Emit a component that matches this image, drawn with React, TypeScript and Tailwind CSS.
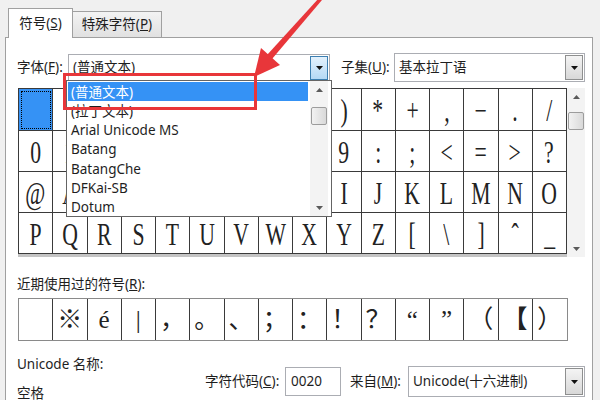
import React from 'react'

const rows: string[][] = [
  [' ', '!', '"', '#', '$', '%', '&', "'", '(', ')', '*', '+', ',', '−', '.', '/'],
  '0123456789:;<=>?'.split(''),
  '@ABCDEFGHIJKLMNO'.split(''),
  ['P', 'Q', 'R', 'S', 'T', 'U', 'V', 'W', 'X', 'Y', 'Z', '[', '\\', ']', 'ˆ', '_'],
]

const recent = ['', '※', 'é', '|', '，', '。', '、', '；', '：', '！', '？', '“', '”', '（', '【', '）']

const fonts = ['(普通文本)', '(拉丁文本)', 'Arial Unicode MS', 'Batang', 'BatangChe', 'DFKai-SB', 'Dotum']

function DropButton({ active }: { active?: boolean }) {
  return (
    <div
      className={
        'flex h-full w-[18px] items-center justify-center border ' +
        (active
          ? 'border-[#3c7fb1] bg-gradient-to-b from-[#e3f1fc] to-[#b4d9f5]'
          : 'border-[#8e8f8f] bg-gradient-to-b from-[#f4f4f4] to-[#d8d8d8]')
      }
    >
      <svg width="7" height="4" viewBox="0 0 7 4">
        <path d="M0 0h7L3.5 4z" fill="#111" />
      </svg>
    </div>
  )
}

function Combo({ text, w, h, active }: { text: string; w: string; h: string; active?: boolean }) {
  return (
    <div className={`${w} ${h} flex items-stretch border border-[#abadb3] bg-white p-px`}>
      <div className="flex flex-1 items-center pl-[3px] text-[13.5px] text-[#1e1e1e]">{text}</div>
      <DropButton active={active} />
    </div>
  )
}

function Scroll({ h, thumbTop }: { h: string; thumbTop: string }) {
  return (
    <div className={`${h} flex w-[18px] flex-col items-center bg-[#f3f3f3]`}>
      <div className="flex h-[17px] w-full items-center justify-center">
        <svg width="7" height="4" viewBox="0 0 7 4">
          <path d="M0 4h7L3.5 0z" fill="#5a5a5a" />
        </svg>
      </div>
      <div className={`${thumbTop} h-[18px] w-[16px] rounded-[2px] border border-[#9c9c9c] bg-gradient-to-r from-[#f2f2f2] to-[#d9d9d9]`} />
      <div className="flex-1" />
      <div className="flex h-[17px] w-full items-center justify-center">
        <svg width="7" height="4" viewBox="0 0 7 4">
          <path d="M0 0h7L3.5 4z" fill="#5a5a5a" />
        </svg>
      </div>
    </div>
  )
}

export default function App() {
  return (
    <div className="relative h-[400px] w-[600px] overflow-hidden bg-[#f0f0f0] font-['Noto_Sans','Noto_Sans_CJK_SC',sans-serif] text-[13.5px] text-[#1e1e1e]">
      {/* tabs */}
      <div className="flex h-[37px] items-end pl-2">
        <div className="relative z-10 mb-[-1px] flex h-[30px] w-[65px] items-center justify-center border border-b-0 border-[#a0a0a0] bg-white">
          符号(<span className="underline">S</span>)
        </div>
        <div className="flex h-[26px] w-[89px] items-center justify-center border border-b-0 border-l-0 border-[#a0a0a0] bg-gradient-to-b from-[#f3f3f3] to-[#e1e1e1]">
          特殊字符(<span className="underline">P</span>)
        </div>
      </div>

      <div className="ml-[5px] h-[380px] w-[588px] border border-[#a0a0a0] bg-white pl-[11px] pt-[15px]">
        <div className="flex h-[29px] items-center">
          <span className="w-[48px]">字体(<span className="underline">F</span>):</span>
          <div className="ml-[3px]">
            <Combo text="(普通文本)" w="w-[262px]" h="h-[28px]" active />
          </div>
          <span className="ml-[11px] w-[50px]">子集(<span className="underline">U</span>):</span>
          <div className="ml-[3px]">
            <Combo text="基本拉丁语" w="w-[191px]" h="h-[29px]" />
          </div>
        </div>

        {/* symbol grid */}
        <div className="ml-[1px] mt-[6px] flex">
          <div className="w-[549px] border-b-[3px] border-[#c4c4c4]">
            <div className="grid w-[549px] grid-cols-16 grid-rows-[42px_41px_41px_41px] border-l border-t border-[#3a3a3a] font-['Liberation_Serif','Noto_Sans_CJK_SC',serif] text-[31px] leading-none text-[#222]">
              {rows.flat().map((c, i) => (
                <div
                  key={i}
                  className={
                    'flex items-center justify-center overflow-hidden border-b border-r border-[#3a3a3a] ' +
                    (i === 0 ? 'bg-[#3592f5] outline outline-1 outline-dotted -outline-offset-[3px] outline-black' : '')
                  }
                >
                  <span className="inline-block scale-x-[0.7] pt-[2px]">{c}</span>
                </div>
              ))}
            </div>
          </div>
          <Scroll h="h-[169px]" thumbTop="mt-[7px]" />
        </div>

        <div className="mt-[18px] leading-[18px]">
          近期使用过的符号(<span className="underline">R</span>):
        </div>

        <div className="ml-[1px] mt-[5px] grid h-[43px] w-[550px] grid-cols-16 border border-[#8a8a8a] font-['Liberation_Serif','Noto_Sans_CJK_SC',serif] text-[25px] leading-none text-[#222]">
          {recent.map((c, i) => (
            <div
              key={i}
              className={
                'flex items-center justify-center ' +
                (i < 15 ? 'border-r border-[#3a3a3a] ' : '') +
                (c === '【' ? 'font-bold' : '')
              }
            >
              <span className="inline-block">{c}</span>
            </div>
          ))}
        </div>

        <div className="flex">
          <div className="w-[188px] pt-[14px] leading-[18px]">
            <div>Unicode 名称:</div>
            <div className="mt-[11px]">空格</div>
          </div>
          <div className="mt-[25px] flex h-[31px] items-center">
            <span className="w-[77px]">字符代码(<span className="underline">C</span>):</span>
            <div className="ml-[3px] flex h-[29px] w-[56px] items-center border border-[#abadb3] bg-white pl-[5px]">0020</div>
            <span className="ml-[9px] w-[55px]">来自(<span className="underline">M</span>):</span>
            <div className="ml-[3px]">
              <Combo text="Unicode(十六进制)" w="w-[177px]" h="h-[31px]" />
            </div>
          </div>
        </div>
      </div>

      {/* open font list */}
      <div className="absolute left-[66px] top-[80px] flex h-[137px] w-[266px] border border-[#646464] bg-white">
        <div className="w-[243px] pl-px pt-px">
          {fonts.map((f, i) => (
            <div
              key={f}
              className={
                'flex h-[19.3px] w-[240px] items-center pl-[3px] ' + (i === 0 ? 'bg-[#3592f5] text-white' : '')
              }
            >
              {f}
            </div>
          ))}
        </div>
        <Scroll h="h-[135px]" thumbTop="mt-[9px]" />
      </div>

      {/* annotation */}
      <div className="absolute left-[63px] top-[73px] h-[37px] w-[194px] border-[3px] border-[#e8363a]" />
      <svg className="pointer-events-none absolute left-0 top-0" width="600" height="400">
        <polygon points="319,-2 322,0 272,59 267,55" fill="#e8363a" />
        <polygon points="254,77 261,48 280,65" fill="#e8363a" />
      </svg>
    </div>
  )
}
